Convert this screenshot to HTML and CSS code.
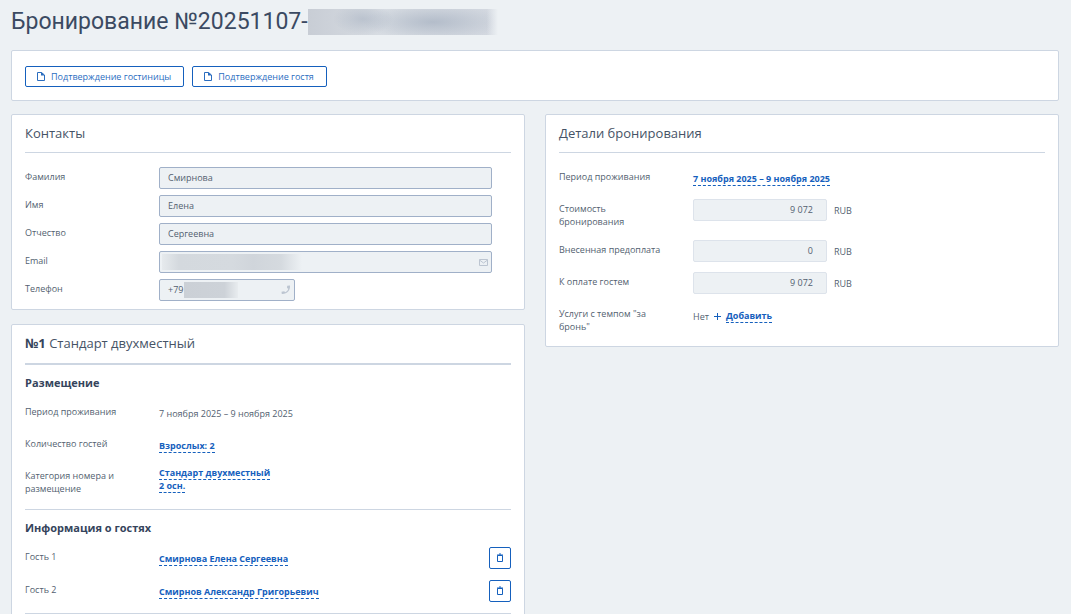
FILE: index.html
```html
<!DOCTYPE html>
<html lang="ru">
<head>
    <meta charset="UTF-8">
    <meta name="viewport" content="width=device-width, initial-scale=1.0">
    <title>Бронирование №20251107</title>
    <link rel="stylesheet" href="styles.css">
</head>
<body>
    <h1 class="page-title">Бронирование №20251107-<span class="masked masked-number"></span></h1>

    <div class="panel toolbar">
        <button type="button" class="btn">
            <svg class="icon-file" viewBox="0 0 8 10" width="8" height="10"><path d="M.5 1.500h4L7.500 4v5.500h-7z" fill="none" stroke="currentColor"/><path d="M4 1v3.500h4z" fill="currentColor"/></svg>
            Подтверждение гостиницы
        </button>
        <button type="button" class="btn">
            <svg class="icon-file" viewBox="0 0 8 10" width="8" height="10"><path d="M.5 1.500h4L7.500 4v5.500h-7z" fill="none" stroke="currentColor"/><path d="M4 1v3.500h4z" fill="currentColor"/></svg>
            Подтверждение гостя
        </button>
    </div>

    <div class="columns">
        <div class="column">
            <section class="panel contacts">
                <h2 class="panel-title">Контакты</h2>
                <div class="rows rows-tight">
                    <div class="row">
                        <label class="label" for="surname">Фамилия</label>
                        <div class="field"><input id="surname" type="text" value="Смирнова" readonly></div>
                    </div>
                    <div class="row">
                        <label class="label" for="name">Имя</label>
                        <div class="field"><input id="name" type="text" value="Елена" readonly></div>
                    </div>
                    <div class="row">
                        <label class="label" for="patronymic">Отчество</label>
                        <div class="field"><input id="patronymic" type="text" value="Сергеевна" readonly></div>
                    </div>
                    <div class="row">
                        <label class="label" for="email">Email</label>
                        <div class="field">
                            <input id="email" type="email" readonly>
                            <span class="masked masked-email"></span>
                            <svg class="field-icon" viewBox="0 0 9 7" width="9" height="7"><path d="M.5.5h8v6h-8zM.5 1l4 3 4-3" fill="none" stroke="currentColor"/></svg>
                        </div>
                    </div>
                    <div class="row">
                        <label class="label" for="phone">Телефон</label>
                        <div class="field field-short">
                            <input id="phone" type="tel" value="+79" readonly>
                            <span class="masked masked-phone"></span>
                            <svg class="field-icon" viewBox="0 0 10 10" width="10" height="10"><path d="M6.200.8L9 .5C9.500 5.500 6 9.300.8 9L.5 6.800l2.700-.6 1 1C6 6.500 7 5.200 7.300 3.700L6 3z" fill="currentColor"/></svg>
                        </div>
                    </div>
                </div>
            </section>

            <section class="panel room">
                <h2 class="panel-title"><b>№1</b> Стандарт двухместный</h2>
                <div class="group">
                    <h3 class="group-title">Размещение</h3>
                    <div class="rows">
                        <div class="row">
                            <span class="label">Период проживания</span>
                            <span class="value">7 ноября 2025 – 9 ноября 2025</span>
                        </div>
                        <div class="row">
                            <span class="label">Количество гостей</span>
                            <span class="value"><a href="#" class="link">Взрослых: 2</a></span>
                        </div>
                        <div class="row">
                            <span class="label">Категория номера и размещение</span>
                            <span class="value value-multi"><a href="#" class="link">Стандарт двухместный<br>2 осн.</a></span>
                        </div>
                    </div>
                </div>
                <div class="group">
                    <h3 class="group-title">Информация о гостях</h3>
                    <div class="rows rows-guests">
                        <div class="row">
                            <span class="label">Гость 1</span>
                            <span class="value"><a href="#" class="link">Смирнова Елена Сергеевна</a></span>
                            <button type="button" class="btn-icon" aria-label="Удалить"><svg viewBox="0 0 8 10" width="8" height="10"><path d="M1 2h6M3 1h2M1.500 2.500h5v6h-5z" fill="none" stroke="currentColor"/></svg></button>
                        </div>
                        <div class="row">
                            <span class="label">Гость 2</span>
                            <span class="value"><a href="#" class="link">Смирнов Александр Григорьевич</a></span>
                            <button type="button" class="btn-icon" aria-label="Удалить"><svg viewBox="0 0 8 10" width="8" height="10"><path d="M1 2h6M3 1h2M1.500 2.500h5v6h-5z" fill="none" stroke="currentColor"/></svg></button>
                        </div>
                    </div>
                </div>
                <div class="group"></div>
            </section>
        </div>

        <div class="column">
            <section class="panel details">
                <h2 class="panel-title">Детали бронирования</h2>
                <div class="rows">
                    <div class="row">
                        <span class="label">Период проживания</span>
                        <span class="value"><a href="#" class="link">7 ноября 2025 – 9 ноября 2025</a></span>
                    </div>
                    <div class="row">
                        <label class="label" for="total">Стоимость бронирования</label>
                        <div class="money"><input id="total" type="text" value="9 072" readonly>RUB</div>
                    </div>
                    <div class="row">
                        <label class="label" for="prepaid">Внесенная предоплата</label>
                        <div class="money"><input id="prepaid" type="text" value="0" readonly>RUB</div>
                    </div>
                    <div class="row">
                        <label class="label" for="due">К оплате гостем</label>
                        <div class="money"><input id="due" type="text" value="9 072" readonly>RUB</div>
                    </div>
                    <div class="row">
                        <span class="label">Услуги с темпом "за бронь"</span>
                        <span class="value services">Нет <svg viewBox="0 0 7 7" width="7" height="7"><path d="M3.500 0v7M0 3.500h7" fill="none" stroke="currentColor"/></svg> <a href="#" class="link">Добавить</a></span>
                    </div>
                </div>
            </section>
        </div>
    </div>
</body>
</html>
```
FILE: styles.css
```css
* {
    box-sizing: border-box;
}

body {
    margin: 0;
    padding: 0 12px 0 11px;
    background-color: #edf1f4;
    color: #535f70;
    font-family: 'Open Sans', 'Noto Sans', sans-serif;
    font-size: 9px;
    line-height: 13px;
}

.page-title {
    display: flex;
    align-items: center;
    height: 44px;
    margin: 0 0 6px;
    color: #3b4a62;
    font-family: Roboto, 'Open Sans', sans-serif;
    font-size: 23px;
    font-weight: 400;
    line-height: 26px;
}

.masked {
    display: inline-block;
}

.masked-number {
    width: 190px;
    height: 26px;
    background:
        linear-gradient(90deg, transparent 94%, #edf1f4),
        radial-gradient(ellipse 30px 16px at 55px 10px, rgba(170, 180, 195, 0.6), transparent),
        radial-gradient(ellipse 70px 18px at 125px 13px, rgba(165, 176, 192, 0.7), transparent),
        linear-gradient(90deg, #c8cdd5, #d8dde3 40%, #d2d7df);
}

.panel {
    background-color: #fff;
    border: 1px solid #cdd6e2;
    border-radius: 2px;
    padding: 0 13px;
}

.toolbar {
    display: flex;
    gap: 8px;
    padding: 15px 13px 13px;
    margin-bottom: 13px;
}

.btn {
    display: flex;
    align-items: center;
    gap: 6px;
    height: 21px;
    padding: 0 12px 1px 11px;
    border: 1px solid #1560bd;
    border-radius: 2px;
    background-color: #fff;
    color: #2a6dbf;
    font: inherit;
    cursor: pointer;
}

.columns {
    display: grid;
    grid-template-columns: 1fr 1fr;
    gap: 20px;
}

.column {
    display: flex;
    flex-direction: column;
    gap: 14px;
}

.panel-title {
    margin: 0;
    padding: 9px 0;
    border-bottom: 1px solid #cdd6e2;
    color: #465366;
    font-size: 13px;
    font-weight: 400;
    line-height: 19px;
}

.panel-title b {
    color: #35445c;
}

.rows {
    display: flex;
    flex-direction: column;
    gap: 10px;
}

.rows-tight {
    gap: 6px;
}

.rows-guests {
    gap: 11px;
}

.row {
    display: flex;
    align-items: flex-start;
    min-height: 22px;
}

.label {
    flex: none;
    width: 134px;
    padding: 3px 20px 2px 0;
}

.value {
    flex: 1;
    padding-top: 5px;
}

.value-multi {
    padding-top: 0;
}

.link {
    color: #1560bd;
    font-weight: 700;
    text-decoration: none;
    border-bottom: 1px dashed #1560bd;
}

.contacts {
    padding-bottom: 8px;
}

.contacts .rows,
.details .rows {
    padding-top: 14px;
}

.details {
    padding-bottom: 11px;
}

.field {
    position: relative;
    flex: 1;
    margin-right: 19px;
}

.field-short {
    flex: none;
    width: 136px;
}

input {
    display: block;
    width: 100%;
    height: 22px;
    padding: 0 8px 1px;
    border: 1px solid #a0b0c8;
    border-radius: 2px;
    background-color: #edf1f4;
    color: #535f70;
    font: inherit;
    outline: none;
}

.field .masked {
    position: absolute;
    top: 3px;
}

.masked-email {
    left: 3px;
    width: 140px;
    height: 16px;
    background: linear-gradient(90deg, #e6eaed, #d4d9de 12%, #d5dadf 50%, #d0d5db 65%, #d5dadf 85%, #edf1f4);
}

.masked-phone {
    left: 25px;
    width: 54px;
    height: 16px;
    background: linear-gradient(90deg, #cbd0d6, #cdd2d8 75%, #e8ecef);
}

.field-icon {
    position: absolute;
    right: 4px;
    top: 0;
    bottom: 0;
    margin: auto 0;
    color: #bcc5d1;
}

.money {
    display: flex;
    align-items: center;
    gap: 7px;
}

.money input {
    width: 134px;
    padding-right: 13px;
    border-color: #dde3eb;
    text-align: right;
}

.services {
    display: flex;
    align-items: center;
    gap: 5px;
}

.services svg {
    color: #1560bd;
}

.room .panel-title {
    padding-bottom: 10px;
}

.group {
    border-top: 1px solid #cdd6e2;
    padding-bottom: 12px;
}

.rows-guests {
    margin-bottom: -1px;
}

.group-title {
    margin: 0;
    padding: 10px 0 11px;
    color: #35445c;
    font-size: 11px;
    font-weight: 700;
    line-height: 16px;
}

.btn-icon {
    display: flex;
    align-items: center;
    justify-content: center;
    width: 22px;
    height: 22px;
    padding: 0;
    border: 1px solid #1560bd;
    border-radius: 2px;
    background-color: #fff;
    color: #1560bd;
    cursor: pointer;
}
```
